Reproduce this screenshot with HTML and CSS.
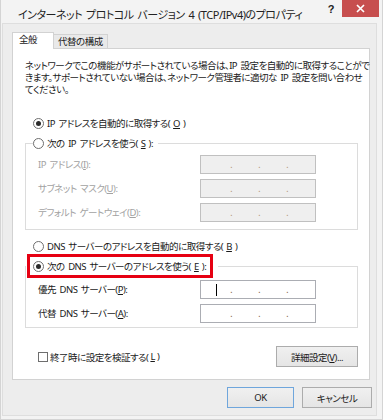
FILE: index.html
```html
<!DOCTYPE html>
<html lang="ja">

<head>
  <meta charset="UTF-8">
  <title>インターネット プロトコル バージョン 4 (TCP/IPv4)のプロパティ</title>
  <link rel="stylesheet" href="styles.css">
</head>

<body>
  <div class="window">
    <div class="titlebar">
      <span class="title">インターネット プロトコル バージョン 4 (TCP/IPv4)のプロパティ</span>
      <span class="help">?</span>
      <span class="close">
        <svg width="9" height="9" viewBox="0 0 9 9"><path d="M1 1 L8 8 M8 1 L1 8" stroke="#fff" stroke-width="1.7" /></svg>
      </span>
    </div>

    <div class="client">
      <div class="tabs">
        <span class="tab active">全般</span>
        <span class="tab">代替の構成</span>
      </div>

      <div class="panel">
        <p class="desc">ネットワークでこの機能がサポートされている場合は、IP 設定を自動的に取得することがで<br>きます。サポートされていない場合は、ネットワーク管理者に適切な IP 設定を問い合わせ<br>てください。</p>

        <label class="opt first"><input type="radio" name="ip" class="radio" checked>IP アドレスを自動的に取得する(<u>O</u>)</label>

        <fieldset class="group group-ip">
          <legend><label class="opt"><input type="radio" name="ip" class="radio">次の IP アドレスを使う(<u>S</u>):</label></legend>
          <div class="fields off">
            <span class="lbl">IP アドレス(<u>I</u>):</span>
            <span class="ip"><span class="seg"></span><span class="dot">.</span><span class="dot">.</span><span class="dot">.</span></span>
            <span class="lbl">サブネット マスク(<u>U</u>):</span>
            <span class="ip"><span class="seg"></span><span class="dot">.</span><span class="dot">.</span><span class="dot">.</span></span>
            <span class="lbl">デフォルト ゲートウェイ(<u>D</u>):</span>
            <span class="ip"><span class="seg"></span><span class="dot">.</span><span class="dot">.</span><span class="dot">.</span></span>
          </div>
        </fieldset>

        <label class="opt dns-auto"><input type="radio" name="dns" class="radio">DNS サーバーのアドレスを自動的に取得する(<u>B</u>)</label>

        <fieldset class="group group-dns">
          <legend class="hl"><label class="opt boxed"><input type="radio" name="dns" class="radio" checked>次の DNS サーバーのアドレスを使う(<u>E</u>):</label></legend>
          <div class="fields">
            <span class="lbl">優先 DNS サーバー(<u>P</u>):</span>
            <span class="ip"><span class="seg"><i class="caret"></i></span><span class="dot">.</span><span class="dot">.</span><span class="dot">.</span></span>
            <span class="lbl">代替 DNS サーバー(<u>A</u>):</span>
            <span class="ip"><span class="seg"></span><span class="dot">.</span><span class="dot">.</span><span class="dot">.</span></span>
          </div>
        </fieldset>

        <div class="panel-foot">
          <label class="check"><input type="checkbox" class="box">終了時に設定を検証する(<u>L</u>)</label>
          <button class="btn advanced">詳細設定(<u>V</u>)...</button>
        </div>
      </div>

      <div class="actions">
        <button class="btn default ok">OK</button>
        <button class="btn cancel">キャンセル</button>
      </div>
    </div>
  </div>
</body>

</html>
```

FILE: styles.css
```css
* {
  box-sizing: border-box;
}

body {
  margin: 0;
  background: #f1f1f1;
  font-family: 'Noto Sans', 'Noto Sans CJK JP', sans-serif;
  font-size: 9.5px;
  letter-spacing: -0.5px;
  word-spacing: 1.5px;
  font-feature-settings: "palt";
  color: #1a1a1a;
}

u {
  text-decoration-thickness: 1px;
  text-underline-offset: 1px;
}

.window {
  width: 383px;
  height: 420px;
  display: flex;
  flex-direction: column;
  border: 1px solid #d4d4d4;
  border-top: none;
  background: #f3f3f3;
}

/* title bar */
.titlebar {
  height: 23px;
  display: flex;
  align-items: flex-start;
  flex-shrink: 0;
}

.title {
  flex: 1;
  padding: 6px 0 0 17px;
  font-size: 11px;
  letter-spacing: -0.5px;
  line-height: 17px;
  color: #222;
  white-space: nowrap;
}

.help {
  font-family: 'Liberation Sans', sans-serif;
  font-weight: bold;
  font-size: 11px;
  line-height: 12px;
  padding-top: 3px;
  margin-right: 8px;
  color: #222;
}

.close {
  width: 37px;
  height: 17px;
  margin-right: 3px;
  background: #c74e4e;
  display: flex;
  align-items: center;
  justify-content: center;
}

/* client area */
.client {
  flex: 1;
  margin: 0 5px 3px 1px;
  padding: 8px 6px 0 9px;
  border: 1px solid #dedede;
  background: #ededed;
}

.tabs {
  display: flex;
  align-items: flex-end;
  height: 16px;
}

.tab {
  height: 14px;
  line-height: 13px;
  padding: 0 4px;
  width: 54px;
  border: 1px solid #d2d2d2;
  border-left: none;
  border-bottom: none;
  background: #e9e9e9;
  white-space: nowrap;
}

.tab.active {
  position: relative;
  z-index: 1;
  width: 42px;
  height: 17px;
  margin-bottom: -1px;
  line-height: 14px;
  padding: 0 6px;
  border-left: 1px solid #d2d2d2;
  background: #fff;
}

.panel {
  background: #fff;
  border: 1px solid #d2d2d2;
  padding: 11px 11px 12px 12px;
}

.desc {
  margin: 0;
  line-height: 12px;
  white-space: nowrap;
}

/* radio rows */
.opt {
  display: flex;
  align-items: center;
  height: 16px;
  gap: 3px;
  white-space: nowrap;
}

.opt.first {
  margin-top: 19px;
  padding-left: 8px;
}

.opt.dns-auto {
  margin-top: 8px;
  padding-left: 8px;
}

.radio {
  appearance: none;
  margin: 0;
  width: 11px;
  height: 11px;
  border: 1px solid #6e6e6e;
  border-radius: 50%;
  background: #fff;
  display: grid;
  place-items: center;
  flex-shrink: 0;
}

.radio:checked::after {
  content: "";
  width: 5px;
  height: 5px;
  border-radius: 50%;
  background: #2b2b2b;
}

/* group boxes */
.group {
  margin: 4px 0 0;
  padding: 0 0 7px;
  min-width: 0;
  border: 1px solid #dcdcdc;
}

.group legend {
  margin-left: 7px;
  padding: 0 5px 0 0;
}

.group-dns {
  margin-top: 0;
  padding-bottom: 4px;
}

.group legend.hl {
  margin-left: 0;
  padding: 0 5px 0 1px;
}

.opt.boxed {
  height: 24px;
  border: 3px solid #e60012;
  padding: 0 4px 0 3px;
}

.fields {
  display: grid;
  grid-template-columns: 162px 116px;
  row-gap: 5px;
  padding-left: 12px;
  margin-top: 4px;
}

.group-dns .fields {
  margin-top: 2px;
}

.lbl {
  line-height: 19px;
  white-space: nowrap;
}

.fields.off .lbl {
  color: #a2a2a2;
}

.ip {
  height: 19px;
  border: 1px solid #abadb3;
  background: #fff;
  display: flex;
  align-items: center;
  line-height: 10px;
}

.fields.off .ip {
  background: #efefef;
  border-color: #c0c0c0;
}

.seg {
  width: 29px;
  display: flex;
  align-items: center;
}

.dot {
  width: 28px;
  color: #8a6a48;
  font-family: 'Liberation Sans', sans-serif;
  font-size: 10px;
  margin-top: 1px;
}

.fields.off .dot {
  color: #b49a80;
}

.caret {
  display: block;
  width: 1px;
  height: 12px;
  margin-left: 15px;
  background: #000;
}

/* footer of the panel */
.panel-foot {
  margin-top: 18px;
  display: flex;
  align-items: center;
  justify-content: space-between;
}

.check {
  display: flex;
  align-items: center;
  gap: 2px;
  padding-left: 13px;
  white-space: nowrap;
}

.box {
  appearance: none;
  margin: 0;
  width: 10px;
  height: 10px;
  border: 1px solid #6e6e6e;
  background: #fff;
}

.btn {
  height: 21px;
  padding: 0;
  border: 1px solid #acacac;
  background: linear-gradient(#f0f0f0, #e5e5e5);
  font: inherit;
  letter-spacing: inherit;
  color: #1a1a1a;
}

.advanced {
  width: 82px;
}

.actions {
  display: flex;
  justify-content: flex-end;
  gap: 8px;
  margin: 7px -2px 0 0;
}

.ok {
  width: 67px;
}

.btn.default {
  border-color: #6fa6dc;
}

.cancel {
  width: 70px;
}
```
